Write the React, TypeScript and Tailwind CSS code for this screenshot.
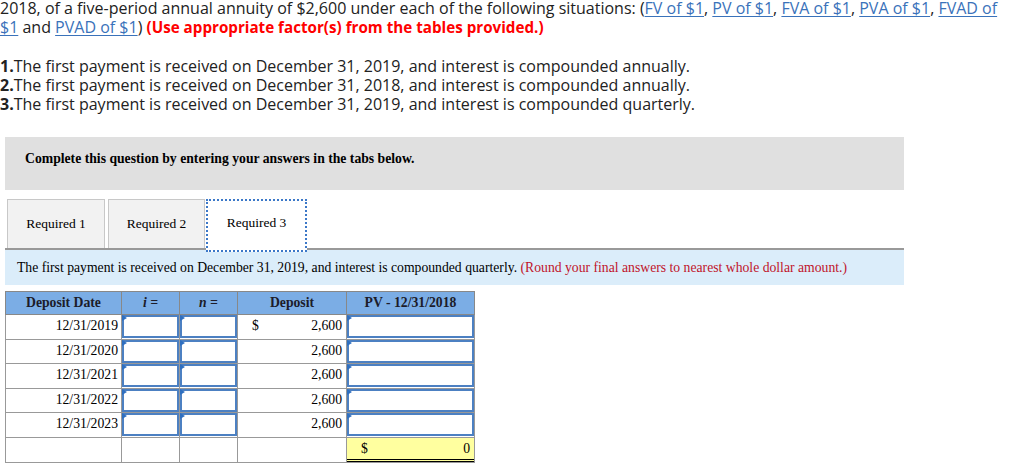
import React from 'react';

const sans = { fontFamily: '"Open Sans", "Liberation Sans", sans-serif' };

const Link = ({ children }: { children: React.ReactNode }) => (
    <span className="text-[#3a72ba] underline decoration-[#3a72ba] underline-offset-2">{children}</span>
);

const InputCell = () => (
    <td className="border border-[#999] p-0">
        <div className="relative h-[23px] border-2 border-[#4c80c2] bg-white">
            <svg className="absolute -left-[2px] -top-[2px]" width="5" height="7" viewBox="0 0 5 7">
                <polygon points="0,0 5,3 0,6" fill="#2f6fc0" />
            </svg>
        </div>
    </td>
);

const rows = ['12/31/2019', '12/31/2020', '12/31/2021', '12/31/2022', '12/31/2023'];

export default function App() {
    return (
        <div className="w-[1024px] h-[471px] overflow-hidden bg-white text-[#222]">
            {/* Question text */}
            <div className="-mt-[1px] text-[16px] leading-[19px]" style={sans}>
                <p className="whitespace-nowrap">
                    2018, of a five-period annual annuity of $2,600 under each of the following situations: (
                    <Link>FV of $1</Link>, <Link>PV of $1</Link>, <Link>FVA of $1</Link>, <Link>PVA of $1</Link>,{' '}
                    <Link>FVAD of</Link>
                    <br />
                    <Link>$1</Link> and <Link>PVAD of $1</Link>){' '}
                    <span className="text-[15.2px] font-bold text-[#ff0000]">(Use appropriate factor(s) from the tables provided.)</span>
                </p>
                <div className="mt-[20px]">
                    <p><b>1.</b>The first payment is received on December 31, 2019, and interest is compounded annually.</p>
                    <p><b>2.</b>The first payment is received on December 31, 2018, and interest is compounded annually.</p>
                    <p><b>3.</b>The first payment is received on December 31, 2019, and interest is compounded quarterly.</p>
                </div>
            </div>

            <div className="ml-[5px] mt-[23px] w-[899px]" style={{ fontFamily: '"Liberation Serif", serif' }}>
                {/* Instruction banner */}
                <div className="h-[53px] bg-[#e0e0e0] px-[20px] pt-[12px] text-[13.7px] font-bold text-black">
                    Complete this question by entering your answers in the tabs below.
                </div>

                {/* Tabs */}
                <div className="mt-[9px] flex h-[49px] items-end gap-[3px] pl-[2px] text-[13.5px] text-black">
                    <div className="flex h-full w-[98px] items-center justify-center border border-b-0 border-[#c8c8c8] bg-[#f2f2f2]">Required 1</div>
                    <div className="flex h-full w-[97px] items-center justify-center border border-b-0 border-[#c8c8c8] bg-[#f2f2f2]">Required 2</div>
                    <div className="relative z-10 -mb-[4px] -ml-[2px] flex h-[53px] w-[101px] items-center justify-center border-2 border-dotted border-[#3c78c8] bg-white pb-[4px]">
                        Required 3
                    </div>
                </div>

                {/* Info bar */}
                <div className="h-[37px] border-t-2 border-[#999] bg-[#dbedfa] pl-[12px] pt-[8px] text-[13.7px] text-black">
                    The first payment is received on December 31, 2019, and interest is compounded quarterly.{' '}
                    <span className="text-[#c0142a]">(Round your final answers to nearest whole dollar amount.)</span>
                </div>

                {/* Table */}
                <table className="mt-[6px] w-[469px] table-fixed border-collapse border border-[#777] text-[13.7px] text-black">
                    <colgroup>
                        <col className="w-[116px]" />
                        <col className="w-[58px]" />
                        <col className="w-[58px]" />
                        <col className="w-[109px]" />
                        <col className="w-[128px]" />
                    </colgroup>
                    <thead>
                        <tr className="h-[23px] bg-[#7badE5] font-bold text-[#1c1c2a]">
                            <th className="border border-[#888] font-bold">Deposit Date</th>
                            <th className="border border-[#888] font-bold italic">i =</th>
                            <th className="border border-[#888] font-bold italic">n =</th>
                            <th className="border border-[#888] font-bold">Deposit</th>
                            <th className="border border-[#888] font-bold">PV - 12/31/2018</th>
                        </tr>
                    </thead>
                    <tbody>
                        {rows.map((d, i) => (
                            <tr key={d} className="h-[24.5px]">
                                <td className="border border-[#999] pr-[3px] text-right">{d}</td>
                                <InputCell />
                                <InputCell />
                                <td className="border border-[#999] px-[4px]">
                                    <div className="flex justify-between pl-[10px]">
                                        <span>{i === 0 ? '$' : ''}</span>
                                        <span>2,600</span>
                                    </div>
                                </td>
                                <InputCell />
                            </tr>
                        ))}
                        <tr className="h-[25px]">
                            <td className="border border-[#999]" />
                            <td className="border border-[#999]" />
                            <td className="border border-[#999]" />
                            <td className="border border-[#999]" />
                            <td className="border border-[#999] p-0">
                                <div className="flex h-[24px] justify-between border-b-[3px] border-double border-black bg-[#ffff9f] pl-[14px] pr-[4px] leading-[21px]">
                                    <span>$</span>
                                    <span>0</span>
                                </div>
                            </td>
                        </tr>
                    </tbody>
                </table>
            </div>
        </div>
    );
}
